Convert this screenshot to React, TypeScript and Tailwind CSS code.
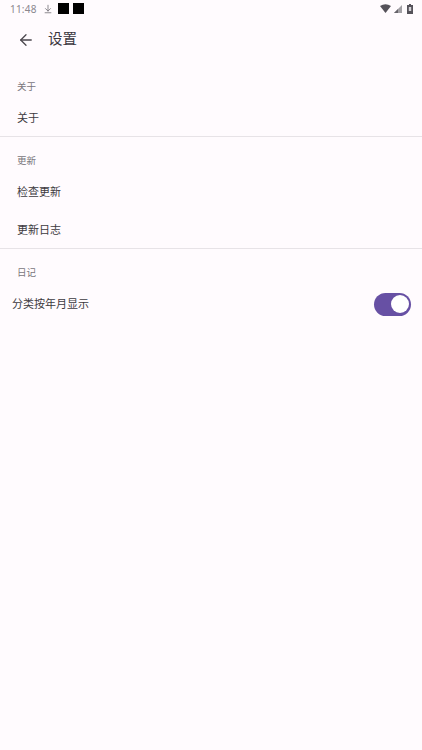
import { ArrowLeft, ArrowDownToLine } from 'lucide-react';

const font = { fontFamily: '"Noto Sans", "Noto Sans CJK SC", sans-serif' };

function StatusBar() {
  return (
    <div className="flex h-[17px] items-center justify-between pl-[10px] pr-[9px]">
      <div className="flex items-center">
        <span className="w-[33px] text-[10px] leading-none tracking-[0.2px] text-[#8a878e]">11:48</span>
        <ArrowDownToLine size={10} strokeWidth={2} className="text-[#77747b]" />
        <div className="ml-[5px] h-[11px] w-[11px] bg-black" />
        <div className="ml-[4px] h-[11px] w-[11px] bg-black" />
      </div>
      <div className="flex items-center gap-[3px]">
        <svg width="11" height="9" viewBox="0 0 11 9">
          <path d="M0 2 Q5.5 -1.5 11 2 L5.5 9 Z" fill="#55525a" />
        </svg>
        <svg width="8" height="8" viewBox="0 0 8 8">
          <path d="M8 0 V8 H0 Z" fill="#a3a1a6" />
          <path d="M4 4 V8 H0 Z" fill="#66636a" />
        </svg>
        <svg width="6" height="10" viewBox="0 0 6 10" className="ml-[2px]">
          <path d="M2 0 H4 V1 H6 V10 H0 V1 H2 Z" fill="#55525a" />
          <rect x="1.8" y="3" width="2.4" height="4" fill="#d5d3d8" />
        </svg>
      </div>
    </div>
  );
}

function Section({ label }: { label: string }) {
  return <div className="h-[14px] pl-[17px] text-[9.5px] leading-[14px] text-[#79767c]">{label}</div>;
}

function Row({ label }: { label: string }) {
  return <div className="flex h-[38px] items-center pl-[17px] text-[11px] text-[#3d3a40]">{label}</div>;
}

export default function App() {
  return (
    <div className="flex h-[750px] w-[422px] flex-col overflow-hidden bg-[#fffbfe]" style={font}>
      <StatusBar />
      <div className="flex h-[45px] items-center pl-[17px]">
        <ArrowLeft size={18} strokeWidth={1.7} className="text-[#49464c]" />
        <span className="ml-[13px] pb-[2px] text-[14.5px] text-[#3b383e]">设置</span>
      </div>
      <div className="pt-[18px]">
        <Section label="关于" />
        <div className="pt-[5px]">
          <Row label="关于" />
        </div>
        <div className="mt-[-1px] h-px bg-[#e7e3e7]" />
      </div>
      <div className="pt-[17px]">
        <Section label="更新" />
        <div className="pt-[5px]">
          <Row label="检查更新" />
          <Row label="更新日志" />
        </div>
        <div className="mt-[-1px] h-px bg-[#e7e3e7]" />
      </div>
      <div className="pt-[17px]">
        <Section label="日记" />
        <div className="flex h-[48px] items-center justify-between pl-[12px] pr-[11px]">
          <span className="text-[11px] text-[#3d3a40]">分类按年月显示</span>
          <div className="flex h-[23px] w-[37px] items-center justify-end rounded-full bg-[#6750a4] pr-[2px]">
            <div className="h-[18px] w-[18px] rounded-full bg-white" />
          </div>
        </div>
      </div>
    </div>
  );
}
